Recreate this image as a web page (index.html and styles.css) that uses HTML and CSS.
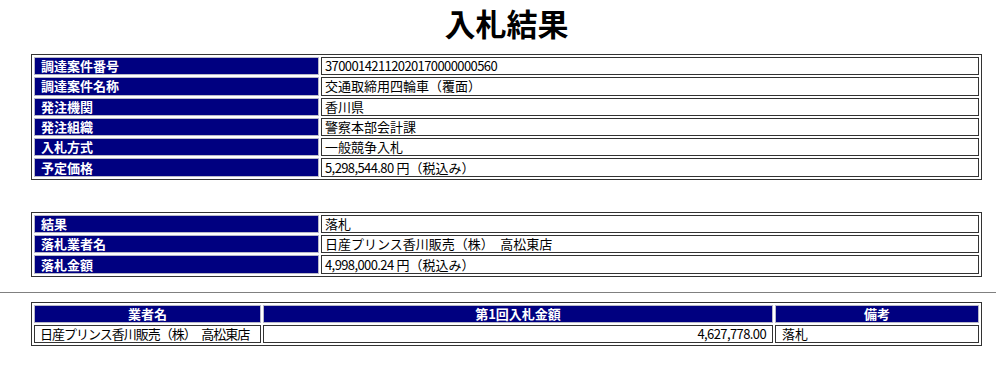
FILE: index.html
```html
<!DOCTYPE html>
<html lang="ja">
<head>
<meta charset="utf-8">
<title>入札結果</title>
<link rel="stylesheet" href="styles.css">
</head>
<body>
<div class="page">
  <h1 class="title">入札結果</h1>
  <table class="info">
    <tr><th>調達案件番号</th><td><span class="num">37000142112020170000000560</span></td></tr>
    <tr><th>調達案件名称</th><td>交通取締用四輪車（覆面）</td></tr>
    <tr><th>発注機関</th><td>香川県</td></tr>
    <tr><th>発注組織</th><td>警察本部会計課</td></tr>
    <tr><th>入札方式</th><td>一般競争入札</td></tr>
    <tr><th>予定価格</th><td><span class="num">5,298,544.80</span> 円（税込み）</td></tr>
  </table>
  <table class="info result">
    <tr><th>結果</th><td>落札</td></tr>
    <tr><th>落札業者名</th><td>日産プリンス香川販売（株）　高松東店</td></tr>
    <tr><th>落札金額</th><td><span class="num">4,998,000.24</span> 円（税込み）</td></tr>
  </table>
</div>
<hr class="rule">
<div class="page">
  <table class="bids">
    <tr><th class="c1">業者名</th><th class="c2">第1回入札金額</th><th class="c3">備考</th></tr>
    <tr><td class="name">日産プリンス香川販売（株）　高松東店</td><td class="amount"><span class="num">4,627,778.00</span></td><td>落札</td></tr>
  </table>
</div>
</body>
</html>
```
FILE: styles.css
```css
html, body {
  margin: 0;
  padding: 0;
  background: #fff;
}
body {
  font-family: "Noto Sans CJK JP", "Noto Sans", sans-serif;
  font-size: 13px;
  color: #000;
}
.page {
  width: 951px;
  margin-left: 31px;
}
.title {
  margin: 0;
  padding-top: 4px;
  height: 54px;
  box-sizing: border-box;
  font-size: 31px;
  line-height: 38px;
  font-weight: bold;
  text-align: center;
  color: #000;
}
table {
  width: 951px;
  border: 1px solid #333;
  border-spacing: 2px;
  border-collapse: separate;
}
th, td {
  height: 16.3px;
  line-height: 16px;
  padding: 0 5px;
  font-size: 13px;
  white-space: nowrap;
}
th {
  background: #000080;
  color: #fff;
  font-weight: bold;
  border: 1px solid #b8b8c8;
}
td {
  border: 1px solid #333;
  padding-left: 3px;
}
.num {
  letter-spacing: -0.6px;
}
.info {
  table-layout: fixed;
}
.info th {
  width: 272px;
  text-align: left;
  padding-left: 6px;
}
.result {
  margin-top: 32px;
}
.rule {
  margin: 15px 0 0 0;
  border: 0;
  border-top: 1px solid #808080;
  height: 0;
}
.bids {
  margin-top: 9px;
  table-layout: fixed;
}
.bids th {
  text-align: center;
}
.bids .c1 { width: 215px; }
.bids .c2 { width: 498px; }
.bids td {
  padding-left: 6px;
}
.bids .name {
  padding-left: 5px;
  letter-spacing: -1px;
}
.bids .amount {
  text-align: right;
  padding-right: 6px;
}
```
